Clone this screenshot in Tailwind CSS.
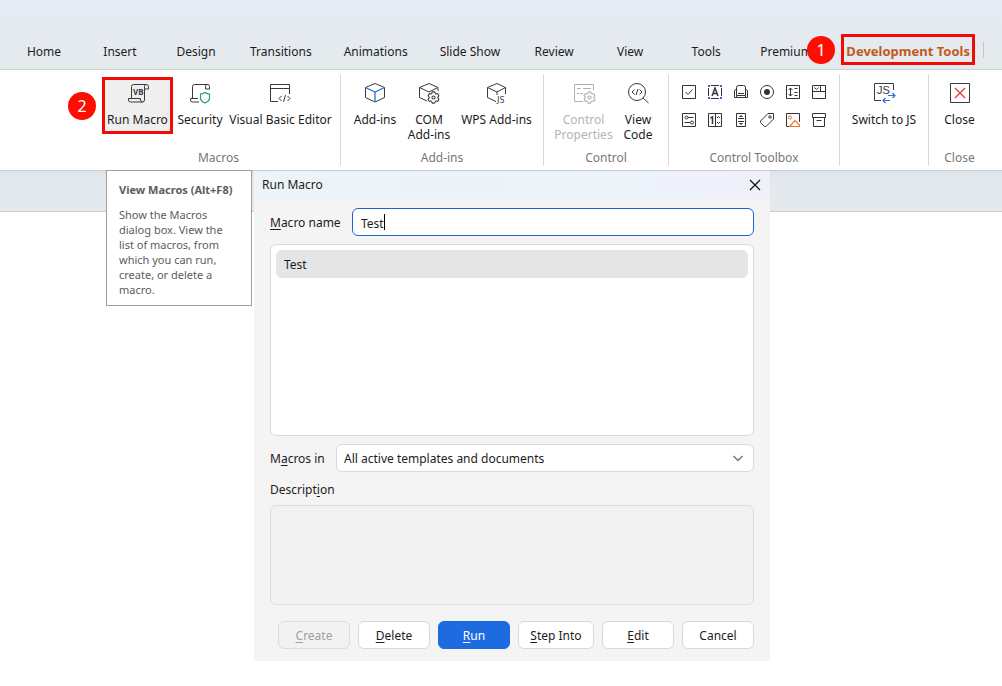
<!DOCTYPE html>
<html lang="en">
<head>
    <meta charset="UTF-8">
    <meta name="viewport" content="width=device-width, initial-scale=1.0">
    <title>Run Macro</title>
    <script src="https://cdn.jsdelivr.net/npm/@tailwindcss/browser@4"></script>
</head>
<body class="relative min-h-screen overflow-x-hidden bg-white font-['Noto_Sans',sans-serif] text-xs text-[#1c1c1c]">

    <!-- Shared icon parts -->
    <svg class="hidden">
        <symbol id="gear" viewBox="0 0 24 24">
            <path fill="none" stroke="currentColor" stroke-width="1.7" d="M9.594 3.94c.09-.542.56-.94 1.11-.94h2.593c.55 0 1.02.398 1.11.94l.213 1.281c.063.374.313.686.645.87.074.04.147.083.22.127.325.196.72.257 1.075.124l1.217-.456a1.125 1.125 0 0 1 1.37.49l1.296 2.247a1.125 1.125 0 0 1-.26 1.431l-1.003.827c-.293.241-.438.613-.43.992a7.723 7.723 0 0 1 0 .255c-.008.378.137.75.43.991l1.004.827c.424.35.534.955.26 1.43l-1.298 2.247a1.125 1.125 0 0 1-1.369.491l-1.217-.456c-.355-.133-.75-.072-1.076.124a6.47 6.47 0 0 1-.22.128c-.331.183-.581.495-.644.869l-.213 1.281c-.09.543-.56.94-1.11.94h-2.594c-.55 0-1.019-.398-1.11-.94l-.213-1.281c-.062-.374-.312-.686-.644-.87a6.52 6.52 0 0 1-.22-.127c-.325-.196-.72-.257-1.076-.124l-1.217.456a1.125 1.125 0 0 1-1.369-.49l-1.297-2.247a1.125 1.125 0 0 1 .26-1.431l1.004-.827c.292-.24.437-.613.43-.991a6.932 6.932 0 0 1 0-.255c.007-.38-.138-.751-.43-.992l-1.004-.827a1.125 1.125 0 0 1-.26-1.43l1.297-2.247a1.125 1.125 0 0 1 1.37-.491l1.216.456c.356.133.751.072 1.076-.124.072-.044.146-.086.22-.128.332-.183.582-.495.644-.869l.214-1.28Z"/>
            <circle cx="12" cy="12" r="2.5" fill="none" stroke="currentColor" stroke-width="1.7"/>
        </symbol>
    </svg>

    <!-- Tabs -->
    <header class="flex items-center border-b border-[#cfd2d5] bg-linear-to-b from-[#e6ebf5] to-[#e5eaed] pt-[34px] pb-1 pl-1.5 whitespace-nowrap">
        <nav class="flex items-center pt-1">
            <a href="#" class="min-w-[76px] px-4 text-center">Home</a>
            <a href="#" class="min-w-[76px] px-4 text-center">Insert</a>
            <a href="#" class="min-w-[76px] px-4 text-center">Design</a>
            <a href="#" class="min-w-[76px] px-4 text-center">Transitions</a>
            <a href="#" class="min-w-[76px] px-4 text-center">Animations</a>
            <a href="#" class="min-w-[76px] px-4 text-center">Slide Show</a>
            <a href="#" class="min-w-[76px] px-4 text-center">Review</a>
            <a href="#" class="min-w-[76px] px-4 text-center">View</a>
            <a href="#" class="min-w-[76px] px-4 text-center">Tools</a>
            <a href="#" class="w-[97px] pl-4">Premium</a>
        </nav>
        <div class="relative">
            <a href="#" class="flex h-[31px] w-[134px] items-center justify-center border-3 border-[#f10b06] pt-1 text-[13px] font-bold text-[#c05a17]">Development Tools</a>
            <span class="absolute -left-[34px] top-0.5 flex size-7 items-center justify-center rounded-full bg-[#fe0d00] text-base text-white">1</span>
        </div>
        <div class="ml-2 h-4 w-px bg-[#c4c8cc]"></div>
    </header>

    <!-- Ribbon -->
    <section class="flex h-[101px] border-b border-[#c9cccf] bg-white pl-[97px] pt-1 pb-1 whitespace-nowrap">
        <div class="flex w-[244px] shrink-0 flex-col border-r border-[#d9d9d9] pt-[3px]">
            <div class="flex h-[75px] items-start pl-[5px]">
                <div class="relative">
                    <button class="flex h-[57px] w-[71px] flex-col items-center border-3 border-[#f10b06] bg-[#efefef] pt-px leading-[15px]">
                        <svg class="mb-[7px] size-6" viewBox="0 0 24 24" fill="none" stroke="#3a3a3a">
                            <path d="M5.5 17.5v-12a2 2 0 0 1 2-2h13a2 2 0 0 1 2 2V8h-4V5.500a2 2 0 0 1 2-2M18.500 8v11a2 2 0 0 1-2 2h-12a2 2 0 0 1-2-2v-1.500h12V19a2 2 0 0 0 2 2"/>
                            <text x="7" y="14" font-family="Noto Sans" font-size="8" font-weight="700" fill="#3a3a3a" stroke="none">VB</text>
                        </svg>
                        Run Macro
                    </button>
                    <span class="absolute -left-[34px] top-[15px] flex size-7 items-center justify-center rounded-full bg-[#fe0d00] text-base text-white">2</span>
                </div>
                <button class="flex w-[54px] flex-col items-center pt-1 leading-[15px]">
                    <svg class="mb-[7px] size-6" viewBox="0 0 24 24" fill="none" stroke="#3a3a3a">
                        <path d="M4.500 17.500v-12a2 2 0 0 1 2-2h13a2 2 0 0 1 2 2V8h-4V5.500a2 2 0 0 1 2-2M10 17.500H2.500V19a2 2 0 0 0 2 2H11"/>
                        <path stroke="#23a074" stroke-width="1.200" d="M17 11.500c1.500 1 3 1.500 4.500 1.500v4c0 2.500-2 4-4.500 5-2.500-1-4.500-2.500-4.500-5v-4c1.500 0 3-.5 4.500-1.500z"/>
                    </svg>
                    Security
                </button>
                <button class="flex w-[107px] flex-col items-center pt-1 leading-[15px]">
                    <svg class="mb-[7px] size-6" viewBox="0 0 24 24" fill="none" stroke="#3a3a3a">
                        <path d="M9 20.500H1.500v-17h19V13M1.500 7.500h19"/>
                        <path d="M12.500 15l-2.500 2.500 2.500 2.500M14.500 21l2-7M18.500 15l2.500 2.500-2.500 2.500"/>
                    </svg>
                    Visual Basic Editor
                </button>
            </div>
            <div class="text-center text-[#777]">Macros</div>
        </div>

        <div class="flex w-[203px] shrink-0 flex-col border-r border-[#d9d9d9] pt-[3px]">
            <div class="flex h-[75px] items-start pl-[7px]">
                <button class="flex w-[54px] flex-col items-center pt-1 leading-[15px]">
                    <svg class="mb-[7px] size-6" viewBox="0 0 24 24" fill="none" stroke="#3a3a3a">
                        <path d="M2.500 6.500L12 2.500l9.500 4v10L12 21l-9.500-4.500z"/>
                        <path stroke="#2e6fe0" stroke-width="1.300" d="M2.500 6.500L12 11l9.500-4.500M12 11v10"/>
                    </svg>
                    Add-ins
                </button>
                <button class="flex w-[54px] flex-col items-center pt-1 leading-[15px]">
                    <svg class="mb-[7px] size-6" viewBox="0 0 24 24" fill="none" stroke="#3a3a3a" color="#3a3a3a">
                        <path d="M10 20l-7.500-3.500v-10l9.500-4 9 4V10M2.500 6.500L12 11l9-4.500"/>
                        <use href="#gear" x="9" y="9" width="15" height="15"/>
                    </svg>
                    <span>COM<br>Add-ins</span>
                </button>
                <button class="flex w-[81px] flex-col items-center pt-1 leading-[15px]">
                    <svg class="mb-[7px] size-6" viewBox="0 0 24 24" fill="none" stroke="#3a3a3a">
                        <path d="M11 20.500l-8.500-4v-10l9.500-4 8.500 4V13M2.500 6.500L12 11l8.500-4.500M12 11v3"/>
                        <text x="12" y="22" font-size="9" fill="#3a3a3a" stroke="none">JS</text>
                    </svg>
                    WPS Add-ins
                </button>
            </div>
            <div class="text-center text-[#777]">Add-ins</div>
        </div>

        <div class="flex w-[125px] shrink-0 flex-col border-r border-[#d9d9d9] pt-[3px]">
            <div class="flex h-[75px] items-start pl-[7px]">
                <button disabled class="flex w-[65px] flex-col items-center pt-1 leading-[15px] text-[#b4b4b4]">
                    <svg class="mb-[7px] size-6" viewBox="0 0 24 24" fill="none" stroke="#b0b0b0" color="#b0b0b0">
                        <path d="M11 20.500H2.500v-17h19V9M5 7.500h4M11 7.500h8M5 12.500h2M8 12.500h3"/>
                        <use href="#gear" x="10" y="9" width="15" height="15"/>
                    </svg>
                    <span>Control<br>Properties</span>
                </button>
                <button class="flex w-11 flex-col items-center pt-1 leading-[15px]">
                    <svg class="mb-[7px] size-6" viewBox="0 0 24 24" fill="none" stroke="#3a3a3a">
                        <circle cx="11" cy="11" r="8.500"/>
                        <path d="M17 17l5.500 5"/>
                        <path d="M8.500 8.500L6 11l2.500 2.500M10 14l2-6M13.500 8.500L16 11l-2.500 2.500"/>
                    </svg>
                    <span>View<br>Code</span>
                </button>
            </div>
            <div class="text-center text-[#777]">Control</div>
        </div>

        <div class="flex w-[171px] shrink-0 flex-col border-r border-[#d9d9d9] pt-[3px]">
            <div class="h-[75px] pl-3 pt-[7px]">
                <div class="grid grid-cols-[repeat(6,16px)] gap-x-2.5 gap-y-3">
                    <button aria-label="Check Box"><svg class="size-4" viewBox="0 0 16 16" fill="none" stroke="#333"><path d="M1.500 1.500h13v13h-13zM4.500 8l2.500 2.500 4.500-5"/></svg></button>
                    <button aria-label="Text Box">
                        <svg class="size-4" viewBox="0 0 16 16" fill="none" stroke="#333">
                            <path d="M4 1.500h8M4 14.500h8M1.500 4v8M14.500 4v8"/>
                            <path stroke-width="1.400" d="M5 12l3-8 3 8M6 9.500h4"/>
                            <path fill="#2e6fe0" stroke="none" d="M1 1h2v2H1zM13 1h2v2h-2zM1 13h2v2H1zM13 13h2v2h-2z"/>
                        </svg>
                    </button>
                    <button aria-label="Command Button"><svg class="size-4" viewBox="0 0 16 16" fill="none" stroke="#333"><path d="M3.500 11.500v-8a2 2 0 0 1 2-2h5a2 2 0 0 1 2 2v8zM3.500 5.500h-1l-1 1.500v6.500h2v-2M12.500 5.500h1l1 1.500v6.500h-2v-2M3.500 13.500h9M5 9.500h6"/></svg></button>
                    <button aria-label="Option Button"><svg class="size-4" viewBox="0 0 16 16" fill="none" stroke="#333"><circle cx="8" cy="8" r="6.500"/><circle cx="8" cy="8" r="3" fill="#333" stroke="none"/></svg></button>
                    <button aria-label="List Box"><svg class="size-4" viewBox="0 0 16 16" fill="none" stroke="#333"><path d="M1.500 1.500h13v13h-13zM9.500 4.500h3M9.500 8.500h3M9.500 11.500h3M5.500 4v8M3.500 6l2-2 2 2M3.500 10l2 2 2-2"/></svg></button>
                    <button aria-label="Combo Box"><svg class="size-4" viewBox="0 0 16 16" fill="none" stroke="#333"><path d="M1.500 1.500h13v13h-13zM1.500 7.500h13M9.500 1.500v6M3.500 3.500l2 2 2-2"/></svg></button>
                    <button aria-label="Toggle Button"><svg class="size-4" viewBox="0 0 16 16" fill="none" stroke="#333"><path d="M1.500 1.500h13v13h-13zM7 5.500h5.500M3.500 10.500H9"/><circle cx="5.500" cy="5.500" r="1.500"/><circle cx="11" cy="10.500" r="1.500"/></svg></button>
                    <button aria-label="Spin Button"><svg class="size-4" viewBox="0 0 16 16" fill="none" stroke="#333"><path d="M1.500 1.500h13v13h-13zM8.500 1.500v13M10 6l1.500-1.500L13 6M10 10l1.500 1.500L13 10"/><path stroke-width="1.500" d="M3.500 6L5.500 5v7"/></svg></button>
                    <button aria-label="Scroll Bar"><svg class="size-4" viewBox="0 0 16 16" fill="none" stroke="#333"><path d="M3.500 1.500h9v13h-9zM5 6.500h6M5 9.500h6"/><path fill="#333" stroke="none" d="M8 3l2 2H6zM8 13l2-2H6z"/></svg></button>
                    <button aria-label="Label"><svg class="size-4" viewBox="0 0 16 16" fill="none" stroke="#333"><path d="M9 1.500h5.500V7L7 14.500H5.500L1.500 10.500V9z"/><circle cx="11" cy="5" r="1.200"/></svg></button>
                    <button aria-label="Image"><svg class="size-4" viewBox="0 0 16 16" fill="none" stroke="#333"><path d="M14.500 10V1.500h-13v13H4"/><path stroke="#e8742c" stroke-width="1.200" d="M4.500 14.500L10 8.500l4.500 4.500v1.500z"/><circle cx="5" cy="5.500" r="1.500" stroke="#e8742c"/></svg></button>
                    <button aria-label="More Controls"><svg class="size-4" viewBox="0 0 16 16" fill="none" stroke="#333"><path d="M1.500 1.500h13v4h-13zM2.500 5.500v9h11v-9M5.500 8.500h5"/></svg></button>
                </div>
            </div>
            <div class="text-center text-[#777]">Control Toolbox</div>
        </div>

        <div class="flex w-[89px] shrink-0 flex-col items-center border-r border-[#d9d9d9] pt-[3px]">
            <button class="flex flex-col items-center px-1.5 pt-1 leading-[15px]">
                <svg class="mb-[7px] size-6" viewBox="0 0 24 24" fill="none" stroke="#3a3a3a">
                    <path d="M9 19.500H2.500v-17h19V9"/>
                    <text x="5" y="13" font-family="Liberation Sans" font-size="11" fill="#3a3a3a" stroke="none">JS</text>
                    <path stroke="#2e6fe0" stroke-width="1.200" d="M16 14.500h7M20.500 12l2.500 2.500-2.500 2.500M18 19.500h-7M13.500 17L11 19.500l2.500 2.500"/>
                </svg>
                Switch to JS
            </button>
        </div>

        <div class="flex w-[61px] shrink-0 flex-col items-center pt-[3px]">
            <button class="flex h-[75px] flex-col items-center px-1.5 pt-1 leading-[15px]">
                <svg class="mb-[7px] size-6" viewBox="0 0 24 24" fill="none" stroke="#3a3a3a">
                    <path d="M2.500 2.500h19v19h-19z"/>
                    <path stroke="#e5343d" stroke-width="1.200" d="M7 7l10 10M17 7L7 17"/>
                </svg>
                Close
            </button>
            <div class="text-[#777]">Close</div>
        </div>
    </section>

    <div class="h-[41px] border-b border-[#c9cfd4] bg-linear-to-b from-[#dde2e6] via-[#e4e9ef] via-20% to-[#e4e9ed]"></div>

    <!-- Tooltip -->
    <div role="tooltip" class="absolute left-[106px] top-[170px] w-[146px] border border-[#a0a0a0] bg-white px-3 pt-[11px] pb-2 text-[11px] leading-[15px] text-[#5c5c5c]">
        <p class="mb-2.5 font-bold whitespace-nowrap">View Macros (Alt+F8)</p>
        <p>Show the Macros dialog box. View the list of macros, from which you can run, create, or delete a macro.</p>
    </div>

    <!-- Run Macro dialog -->
    <form class="absolute left-[254px] top-[171px] w-[516px] bg-[#f4f4f4]">
        <div class="flex h-7 items-center justify-between bg-linear-to-r from-[#edf3f7] to-[#eef1fa] pl-2 pr-2">
            <span>Run Macro</span>
            <button type="button" aria-label="Close dialog">
                <svg class="size-3.5" viewBox="0 0 14 14" fill="none" stroke="#111" stroke-width="1.200"><path d="M2 2l10 10M12 2L2 12"/></svg>
            </button>
        </div>
        <div class="px-4 pt-[9px] pb-3 text-[#1c1c1c]">
            <div class="flex items-center">
                <label for="macroName" class="w-[82px] pt-0.5 whitespace-nowrap"><u class="underline-offset-2">M</u>acro name</label>
                <div class="relative flex-1">
                    <input id="macroName" type="text" value="Test" class="block h-7 w-full rounded-md border border-[#1f63d0] bg-white px-2 pt-0.5 caret-transparent outline-none">
                    <span class="absolute left-8 top-1.5 h-4 w-px bg-black"></span>
                </div>
            </div>
            <ul class="mt-2 h-48 rounded-md border border-[#d9d9d9] bg-white p-[5px]">
                <li class="flex h-7 items-center rounded-md bg-[#e5e5e5] px-2 pt-0.5">Test</li>
            </ul>
            <div class="mt-2 flex items-center">
                <label for="macrosIn" class="w-[66px] pt-0.5 whitespace-nowrap">M<u class="underline-offset-2">a</u>cros in</label>
                <div class="relative flex-1">
                    <select id="macrosIn" class="block h-7 w-full appearance-none rounded-md border border-[#d9d9d9] bg-white px-[7px] pt-0.5">
                        <option>All active templates and documents</option>
                    </select>
                    <svg class="pointer-events-none absolute right-2.5 top-2 size-3" viewBox="0 0 12 12" fill="none" stroke="#777" stroke-width="1.500"><path d="M1.500 4L6 8.500 10.500 4"/></svg>
                </div>
            </div>
            <label for="description" class="mt-2.5 mb-[7px] block">Descript<u class="underline-offset-2">i</u>on</label>
            <textarea id="description" disabled class="block h-[100px] w-full resize-none rounded-md border border-[#dcdcdc] bg-[#f2f2f2]"></textarea>
            <div class="mt-4 flex justify-end gap-2">
                <button type="button" disabled class="h-7 min-w-[72px] rounded-md border border-[#dcdcdc] bg-[#f2f2f2] px-[11px] pt-0.5 text-[#a0a0a0]"><u class="underline-offset-2">C</u>reate</button>
                <button type="button" class="h-7 min-w-[72px] rounded-md border border-[#d9d9d9] bg-white px-[11px] pt-0.5"><u class="underline-offset-2">D</u>elete</button>
                <button type="button" class="h-7 min-w-[72px] rounded-md border border-[#1e6ae1] bg-[#1e6ae1] px-[11px] pt-0.5 text-white"><u class="underline-offset-2">R</u>un</button>
                <button type="button" class="h-7 min-w-[76px] rounded-md border border-[#d9d9d9] bg-white px-[11px] pt-0.5"><u class="underline-offset-2">S</u>tep Into</button>
                <button type="button" class="h-7 min-w-[72px] rounded-md border border-[#d9d9d9] bg-white px-[11px] pt-0.5"><u class="underline-offset-2">E</u>dit</button>
                <button type="button" class="h-7 min-w-[72px] rounded-md border border-[#d9d9d9] bg-white px-[11px] pt-0.5">Cancel</button>
            </div>
        </div>
    </form>

</body>
</html>
